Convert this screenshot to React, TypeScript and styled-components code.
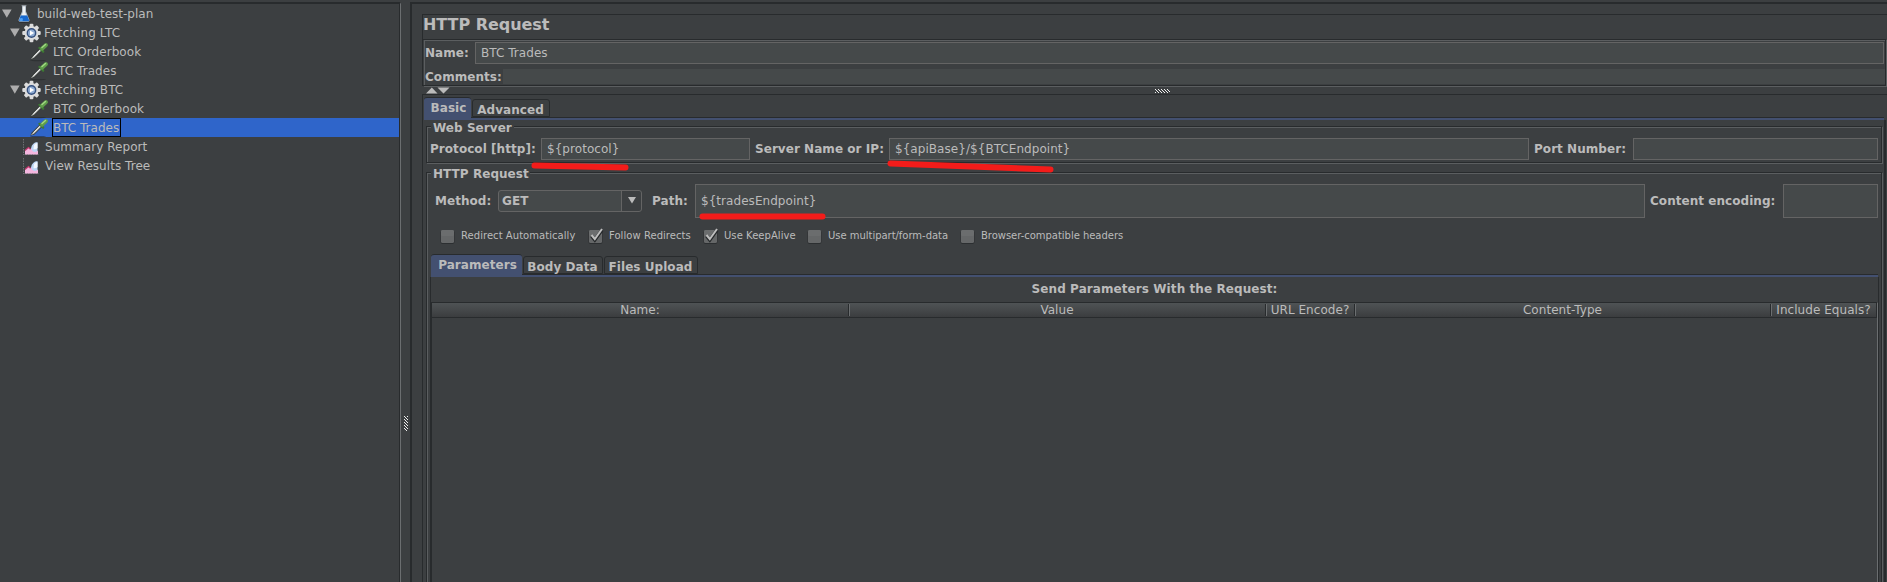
import React from 'react';
import styled, { createGlobalStyle, css } from 'styled-components';

const c = {
  bg: '#3c3f41',
  field: '#45494a',
  fieldBorder: '#646464',
  text: '#bbbbbb',
  dark: '#282b2d',
  light: '#5b5e60',
  tab: '#435070',
  select: '#2f65ca',
};

const GlobalStyle = createGlobalStyle`
  * { box-sizing: border-box; }
  body {
    margin: 0;
    background: ${c.bg};
    color: ${c.text};
    font: 12px/14px "DejaVu Sans", sans-serif;
    letter-spacing: 0.05px;
    overflow: hidden;
  }
`;

const Window = styled.div`
  position: relative;
  display: flex;
  width: 1887px;
  height: 582px;
  padding-top: 2px;
  overflow: hidden;
  white-space: nowrap;
`;

/* ---------- tree ---------- */

const TreePane = styled.div`
  width: 401px;
  flex: none;
  border-top: 2px solid ${c.dark};
  border-right: 1px solid #6b6e70;
`;

const TreeBody = styled.div`
  height: 100%;
  border-right: 1px solid ${c.dark};
`;

const TreeRow = styled.div<{ $indent: number; $selected?: boolean }>`
  display: flex;
  align-items: center;
  height: 19px;
  padding-left: ${p => p.$indent}px;
  background: ${p => (p.$selected ? c.select : 'transparent')};
`;

const TreeText = styled.span<{ $focus?: boolean; $gap: number; $sp?: number }>`
  height: 19px;
  padding: 2px 1px 0 0;
  margin-left: ${p => p.$gap}px;
  letter-spacing: ${p => p.$sp ?? 0.05}px;
  border: 1px solid ${p => (p.$focus ? '#000' : 'transparent')};
`;

const TreeArrow = styled.svg`
  width: 10px;
  height: 9px;
  flex: none;
  margin-right: 2px;
`;

const RowIcon = styled.svg`
  width: 20px;
  height: 20px;
  flex: none;
  overflow: visible;
`;

/* ---------- splitters ---------- */

const VSplitter = styled.div`
  width: 9px;
  flex: none;
  padding: 414px 0 0 3px;
`;

const HSplitter = styled.div`
  display: flex;
  height: 9px;
  padding: 1px 0 0 4px;
`;

const Grip = styled.svg`
  display: block;
`;

/* ---------- main pane ---------- */

const MainPane = styled.div`
  width: 1477px;
  flex: none;
  display: flex;
  flex-direction: column;
  border: solid ${c.dark};
  border-width: 2px 0 0 2px;
  padding: 10px 0 0 10px;
`;

const HeaderPanel = styled.div`
  height: 72px;
  flex: none;
  border: solid ${c.dark};
  border-width: 1px 0 0 1px;
`;

const Title = styled.h1`
  margin: 0;
  height: 24px;
  padding: 0;
  font-size: 16px;
  line-height: 19px;
  letter-spacing: -0.04px;
`;

const NamePanel = styled.div`
  height: 47px;
  width: 1463px;
  border: 1px solid ${c.dark};
  border-width: 1px 1px 1px 0;
  box-shadow: 1px 1px 0 ${c.light};
`;

const NameInner = styled.div`
  height: 45px;
  margin-left: 1px;
  border: solid ${c.light};
  border-width: 1px 0 0 1px;
  padding-top: 1px;
`;

const NameRow = styled.div`
  display: flex;
  align-items: center;
`;

const CommentRow = styled(NameRow)`
  margin-top: 5px;
  height: 15px;
`;

const Label = styled.label<{ $w: number; $pad?: number }>`
  width: ${p => p.$w}px;
  padding-left: ${p => p.$pad ?? 0}px;
  flex: none;
  font-weight: bold;
`;

const Field = styled.div<{ $w: number; $h?: number }>`
  display: flex;
  align-items: center;
  width: ${p => p.$w}px;
  height: ${p => p.$h ?? 22}px;
  flex: none;
  padding-left: 5px;
  background: ${c.field};
  border: 1px solid ${c.fieldBorder};
`;

const PlainField = styled.div`
  flex: 1;
  height: 15px;
  background: ${c.field};
`;

/* ---------- tabs ---------- */

const Body = styled.div`
  flex: 1;
  border: solid ${c.dark};
  border-width: 1px 0 0 1px;
  padding: 2px 0 0 1px;
`;

const TabBar = styled.div`
  display: flex;
  align-items: flex-end;
  height: 20px;
`;

const Tab = styled.div<{ $active?: boolean; $w: number }>`
  width: ${p => p.$w}px;
  font-weight: bold;
  text-align: center;
  border-radius: 3px 3px 0 0;
  ${p =>
    p.$active
      ? css`
          height: 20px;
          padding: 3px 0 0 2px;
          background: ${c.tab};
          border-top: 1px solid ${c.dark};
        `
      : css`
          height: 18px;
          padding: 3px 1px 0 0;
          margin-left: 1px;
          border: 1px solid ${c.dark};
        `}
`;

const TabLine = styled.div<{ $skip: number; $w: number }>`
  width: ${p => p.$w}px;
  height: 3px;
  background: linear-gradient(${c.tab}, ${c.tab}) 0 0 / ${p => p.$skip}px 1px no-repeat,
    linear-gradient(${c.dark} 1px, ${c.tab} 1px);
`;

const OuterPage = styled.div`
  width: 1462px;
  height: 500px;
  border-right: 2px solid ${c.dark};
  padding: 6px 1px 0 2px;
`;

/* ---------- etched groups ---------- */

const Group = styled.fieldset<{ $h: number; $top?: number }>`
  width: 1456px;
  height: ${p => p.$h}px;
  min-width: 0;
  margin: ${p => p.$top ?? 0}px 0 0;
  padding: 0;
  border: 1px solid ${c.dark};
  box-shadow: inset 1px 1px 0 ${c.light}, 1px 1px 0 ${c.light};
`;

const Legend = styled.div<{ $w: number }>`
  width: ${p => p.$w}px;
  height: 14px;
  margin: -6px 0 0 4px;
  padding-left: 2px;
  background: ${c.bg};
  font-weight: bold;
`;

const ServerRow = styled.div`
  display: flex;
  align-items: center;
  padding: 3px 0 0 3px;
`;

const MethodRow = styled.div`
  display: flex;
  align-items: center;
  height: 34px;
  margin: 3px 0 0 8px;
`;

const Combo = styled.div`
  display: flex;
  width: 144px;
  height: 22px;
  margin: 0 10px 1px 0;
  flex: none;
  border: 1px solid ${c.fieldBorder};
  border-radius: 3px;
  background: ${c.field};
  font-weight: bold;
`;

const ComboText = styled.span`
  flex: 1;
  padding: 3px 0 0 3px;
`;

const ComboButton = styled.span`
  display: flex;
  align-items: center;
  justify-content: center;
  width: 20px;
  border-left: 1px solid ${c.fieldBorder};
  background: ${c.bg};
  border-radius: 0 3px 3px 0;
`;

const Checks = styled.div`
  display: flex;
  height: 16px;
  margin: 10px 0 0 13px;
`;

const Check = styled.div<{ $w: number; $sp?: number }>`
  display: flex;
  width: ${p => p.$w}px;
  font-size: 10px;
  line-height: 15px;
  letter-spacing: ${p => p.$sp ?? 0}px;
`;

const CheckSvg = styled.svg`
  width: 16px;
  height: 18px;
  margin: -1px 5px 0 0;
  flex: none;
`;

const InnerPane = styled.div`
  width: 1449px;
  margin: 10px 0 0 3px;
  padding-left: 1px;
`;

const InnerPage = styled.div`
  width: 1449px;
  height: 340px;
  margin-left: -1px;
  border: solid ${c.dark};
  border-width: 0 1px;
`;

const TableTitle = styled.div`
  height: 25px;
  padding-top: 5px;
  font-weight: bold;
  text-align: center;
  letter-spacing: 0.08px;
`;

const Table = styled.div`
  height: 300px;
  border: solid ${c.dark};
  border-width: 1px 0 0 1px;
  border-right: 1px solid #6b6e70;
`;

const TableHead = styled.div`
  display: flex;
  width: 1445px;
  height: 15px;
  border-bottom: 1px solid ${c.dark};
  border-right: 1px solid ${c.dark};
  background: linear-gradient(#4f5355, #3b3d3f);
`;

const Th = styled.div<{ $w: number }>`
  width: ${p => p.$w}px;
  height: 12px;
  margin-top: 1px;
  line-height: 13px;
  text-align: center;
  border-right: 1px solid ${c.dark};
  box-shadow: 1px 0 0 #6b6e70;

  &:last-child {
    border-right: 0;
    box-shadow: none;
  }
`;

const Marks = styled.svg`
  position: absolute;
  left: 0;
  top: 0;
`;

const Arrow = () => (
  <TreeArrow viewBox="0 0 10 9">
    <path d="M0 0.5H9.6L4.8 8.8Z" fill="#adadad" />
  </TreeArrow>
);

const Flask = () => (
  <RowIcon viewBox="-1 0 20 20">
    <ellipse cx="9" cy="17.6" rx="6.5" ry="1.2" fill="#2b2d2f" />
    <path d="M7 1.5h4v6l3.4 8.2q.5 1.900-1.200 2.100H4.800Q3 17.600 3.600 15.700L7 7.500Z" fill="#b9c3cd" />
    <path d="M8 2h2v6l1.500 3.500H6.500l1.500-3.500Z" fill="#eef1f3" />
    <path d="M5.700 11.500h6.600l1.700 4.600q.2 1.200-1 1.200H5q-1.100 0-.8-1.200Z" fill="#1769cf" />
    <path d="M5 14.500q1.500-1 3 .2l-.5 2.200H4.500Z" fill="#4fa0f3" />
    <rect x="6.500" y="1" width="5" height="1.300" rx=".6" fill="#8c9299" />
  </RowIcon>
);

const Gear = () => (
  <RowIcon viewBox="0 0 20 20">
    <g fill="#dcdcdc">
      {[0, 45, 90, 135].map(a => (
        <rect key={a} x="7.600" y=".8" width="3.800" height="18.400" rx="1" transform={`rotate(${a} 9.500 10)`} />
      ))}
      <circle cx="9.500" cy="10" r="7" />
    </g>
    <circle cx="9.500" cy="10" r="4.900" fill="#34507e" />
    <circle cx="9.500" cy="10" r="3.500" fill="#8fabd2" />
    <path d="M8 7.500L12.200 10L8 12.500Z" fill="#fff" />
  </RowIcon>
);

const Pipette = () => (
  <RowIcon viewBox="1 0 20 20">
    <ellipse cx="9" cy="18.600" rx="8" ry=".7" fill="#25282a" opacity=".55" />
    <path d="M1.300 17.800L3 14.300 10.500 6.700l2.500 2.300-7.600 7.500Z" fill="#343835" />
    <path d="M1.800 17.200L3.800 14.700 10.800 7.500l1.300 1.300-7.100 7Z" fill="#bfc2c0" />
    <path d="M4.700 14.600L11 8.200" stroke="#f1f2f1" strokeWidth="1" />
    <path d="M10.400 5.800l3.800 3.800" stroke="#3d7a33" strokeWidth="2.200" strokeLinecap="round" />
    <path d="M13 6.700l4-3.700" stroke="#5f9c4a" strokeWidth="4" strokeLinecap="round" />
    <path d="M13 5.500L16.500 2.500" stroke="#a2d884" strokeWidth="1.500" strokeLinecap="round" />
  </RowIcon>
);

const Report = () => (
  <RowIcon viewBox="0 0 20 20">
    <path d="M1.500 2v16M1 17.500h15.500" stroke="#6c6f73" strokeWidth="1" strokeDasharray="1.500 1" />
    <path d="M3 17.500v-4l3.500-3 2 1.800 2.500-2 5 4v3.200Z" fill="#f4b6df" />
    <path d="M3 13.500l3.500-3 2 1.800" fill="none" stroke="#c43a70" strokeWidth="1.200" />
    <path d="M9 11.500q1-6 6.500-6.500v9q-3 2-5 0Z" fill="#bcd5f5" />
    <path d="M12 8q1.500-2 3.500-2v5q-2 2-4 1Z" fill="#f3f8ff" />
  </RowIcon>
);

const CheckMark = ({ on }: { on?: boolean }) => (
  <CheckSvg viewBox="0 0 16 18">
    <rect x=".5" y="3.500" width="14" height="13.500" rx="2" fill="#2c2f31" />
    <rect x="1" y="3" width="13" height="13" rx="1.500" fill="#656768" />
    <rect x="1" y="3" width="13" height="6" rx="1.500" fill="#6b6d6e" />
    {on && (
      <>
        <path d="M3.500 9l3.300 4L14 3" fill="none" stroke="#25282a" strokeWidth="3.400" />
        <path d="M3.500 8l3.300 4L14 2" fill="none" stroke="#bdbdbd" strokeWidth="2" />
      </>
    )}
  </CheckSvg>
);

const DotGrip = ({ cols, rows }: { cols: number; rows: number }) => (
  <Grip width={cols} height={rows} shapeRendering="crispEdges">
    {Array.from({ length: cols * rows }, (_, i) => {
      const x = i % cols;
      const y = Math.floor(i / cols);
      return (x - y + 18) % 3 === 0 ? <rect key={i} x={x} y={y} width="1" height="1" fill="#f0f0f0" /> : null;
    })}
  </Grip>
);

const GripSlot = styled.div`
  margin: 2px 0 0 705px;
`;

export default function App() {
  return (
    <>
      <GlobalStyle />
      <Window>
        <TreePane>
          <TreeBody>
            <TreeRow $indent={2}><Arrow /><Flask /><TreeText $gap={2} $sp={0}>build-web-test-plan</TreeText></TreeRow>
            <TreeRow $indent={10}><Arrow /><Gear /><TreeText $gap={1} $sp={0.1}>Fetching LTC</TreeText></TreeRow>
            <TreeRow $indent={30}><Pipette /><TreeText $gap={2} $sp={0.08}>LTC Orderbook</TreeText></TreeRow>
            <TreeRow $indent={30}><Pipette /><TreeText $gap={2}>LTC Trades</TreeText></TreeRow>
            <TreeRow $indent={10}><Arrow /><Gear /><TreeText $gap={1} $sp={0.1}>Fetching BTC</TreeText></TreeRow>
            <TreeRow $indent={30}><Pipette /><TreeText $gap={2}>BTC Orderbook</TreeText></TreeRow>
            <TreeRow $indent={30} $selected><Pipette /><TreeText $gap={2} $sp={0} $focus>BTC Trades</TreeText></TreeRow>
            <TreeRow $indent={22}><Report /><TreeText $gap={2}>Summary Report</TreeText></TreeRow>
            <TreeRow $indent={22}><Report /><TreeText $gap={2}>View Results Tree</TreeText></TreeRow>
          </TreeBody>
        </TreePane>
        <VSplitter><DotGrip cols={4} rows={15} /></VSplitter>
        <MainPane>
          <HeaderPanel>
            <Title>HTTP Request</Title>
            <NamePanel>
              <NameInner>
                <NameRow><Label $w={50}>Name:</Label><Field $w={1409}>BTC Trades</Field></NameRow>
                <CommentRow><Label $w={78}>Comments:</Label><PlainField /></CommentRow>
              </NameInner>
            </NamePanel>
          </HeaderPanel>
          <HSplitter>
            <svg width="24" height="7"><path d="M0 6.500L5.800 .5 11.500 6.500ZM11.500 .5H23.500L17.500 6.500Z" fill="#bbb" /></svg>
            <GripSlot><DotGrip cols={15} rows={4} /></GripSlot>
          </HSplitter>
          <Body>
            <TabBar>
              <Tab $active $w={47}>Basic</Tab>
              <Tab $w={78}>Advanced</Tab>
            </TabBar>
            <TabLine $skip={47} $w={1460} />
            <OuterPage>
              <Group $h={37}>
                <Legend $w={83}>Web Server</Legend>
                <ServerRow>
                  <Label $w={111}>Protocol [http]:</Label>
                  <Field $w={209}>{'${protocol}'}</Field>
                  <Label $w={139} $pad={5}>Server Name or IP:</Label>
                  <Field $w={640}>{'${apiBase}/${BTCEndpoint}'}</Field>
                  <Label $w={104} $pad={5}>Port Number:</Label>
                  <Field $w={245} />
                </ServerRow>
              </Group>
              <Group $h={450} $top={9}>
                <Legend $w={99}>HTTP Request</Legend>
                <MethodRow>
                  <Label $w={63}>Method:</Label>
                  <Combo>
                    <ComboText>GET</ComboText>
                    <ComboButton><svg width="8" height="7"><path d="M0 0H8L4 6.500Z" fill="#bbb" /></svg></ComboButton>
                  </Combo>
                  <Label $w={43}>Path:</Label>
                  <Field $w={950} $h={34}>{'${tradesEndpoint}'}</Field>
                  <Label $w={138} $pad={5}>Content encoding:</Label>
                  <Field $w={95} $h={34} />
                </MethodRow>
                <Checks>
                  <Check $w={148} $sp={0.05}><CheckMark />Redirect Automatically</Check>
                  <Check $w={115} $sp={0.05}><CheckMark on />Follow Redirects</Check>
                  <Check $w={104} $sp={0.05}><CheckMark on />Use KeepAlive</Check>
                  <Check $w={153} $sp={-0.03}><CheckMark />Use multipart/form-data</Check>
                  <Check $w={180} $sp={-0.03}><CheckMark />Browser-compatible headers</Check>
                </Checks>
                <InnerPane>
                  <TabBar>
                    <Tab $active $w={91}>Parameters</Tab>
                    <Tab $w={80}>Body Data</Tab>
                    <Tab $w={94}>Files Upload</Tab>
                  </TabBar>
                  <TabLine $skip={91} $w={1447} />
                  <InnerPage>
                    <TableTitle>Send Parameters With the Request:</TableTitle>
                    <Table>
                      <TableHead>
                        <Th $w={417}>Name:</Th>
                        <Th $w={417}>Value</Th>
                        <Th $w={89}>URL Encode?</Th>
                        <Th $w={416}>Content-Type</Th>
                        <Th $w={105}>Include Equals?</Th>
                      </TableHead>
                    </Table>
                  </InnerPage>
                </InnerPane>
              </Group>
            </OuterPage>
          </Body>
        </MainPane>
        <Marks width="1887" height="582" fill="none" stroke="#f31c1a" strokeWidth="6" strokeLinecap="round">
          <path d="M534.500 165.500L625.500 167.500" />
          <path d="M890.500 163.500L1050.500 169.500" />
          <path d="M702.500 216.500H822.500" />
        </Marks>
      </Window>
    </>
  );
}
